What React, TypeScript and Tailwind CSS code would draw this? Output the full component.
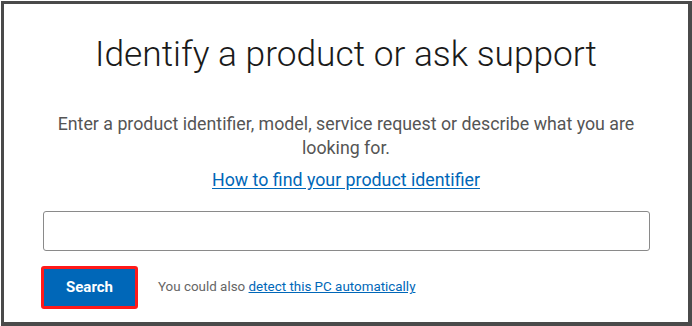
import React from 'react';

const App: React.FC = () => {
  return (
    <div className="w-[692px] h-[326px] bg-white pt-px pl-px font-['Roboto',sans-serif]">
      <div className="w-[691px] h-[325px] border-[3px] border-r-4 border-b-4 border-[#4a4a4a] bg-white flex flex-col">
        <h1 className="mt-[26px] text-center text-[35.3px] leading-[48px] font-light text-[#1a1a1a]">
          Identify a product or ask support
        </h1>
        <p className="mt-[34px] px-[50px] text-center text-[17.8px] leading-[24px] text-[#555]">
          Enter a product identifier, model, service request or describe what you are looking for.
        </p>
        <a
          href="#"
          className="mt-[7px] self-center text-[17.8px] leading-[26px] text-[#0067b8] underline underline-offset-2"
        >
          How to find your product identifier
        </a>
        <input
          type="text"
          className="mt-[18px] ml-[39px] w-[607px] h-[40px] border border-[#8a8a8a] rounded-[3px] outline-none"
        />
        <div className="mt-[15px] ml-[37px] flex items-center">
          <button
            type="button"
            className="w-[97px] h-[43px] border-[3px] border-[#ff1a1a] rounded-[3px] bg-[#0067b8] text-white font-bold text-[15px]"
          >
            Search
          </button>
          <span className="ml-[20px] text-[13.4px] text-[#666]">
            You could also{' '}
            <a href="#" className="text-[#0067b8] underline">
              detect this PC automatically
            </a>
          </span>
        </div>
      </div>
    </div>
  );
};

export default App;
